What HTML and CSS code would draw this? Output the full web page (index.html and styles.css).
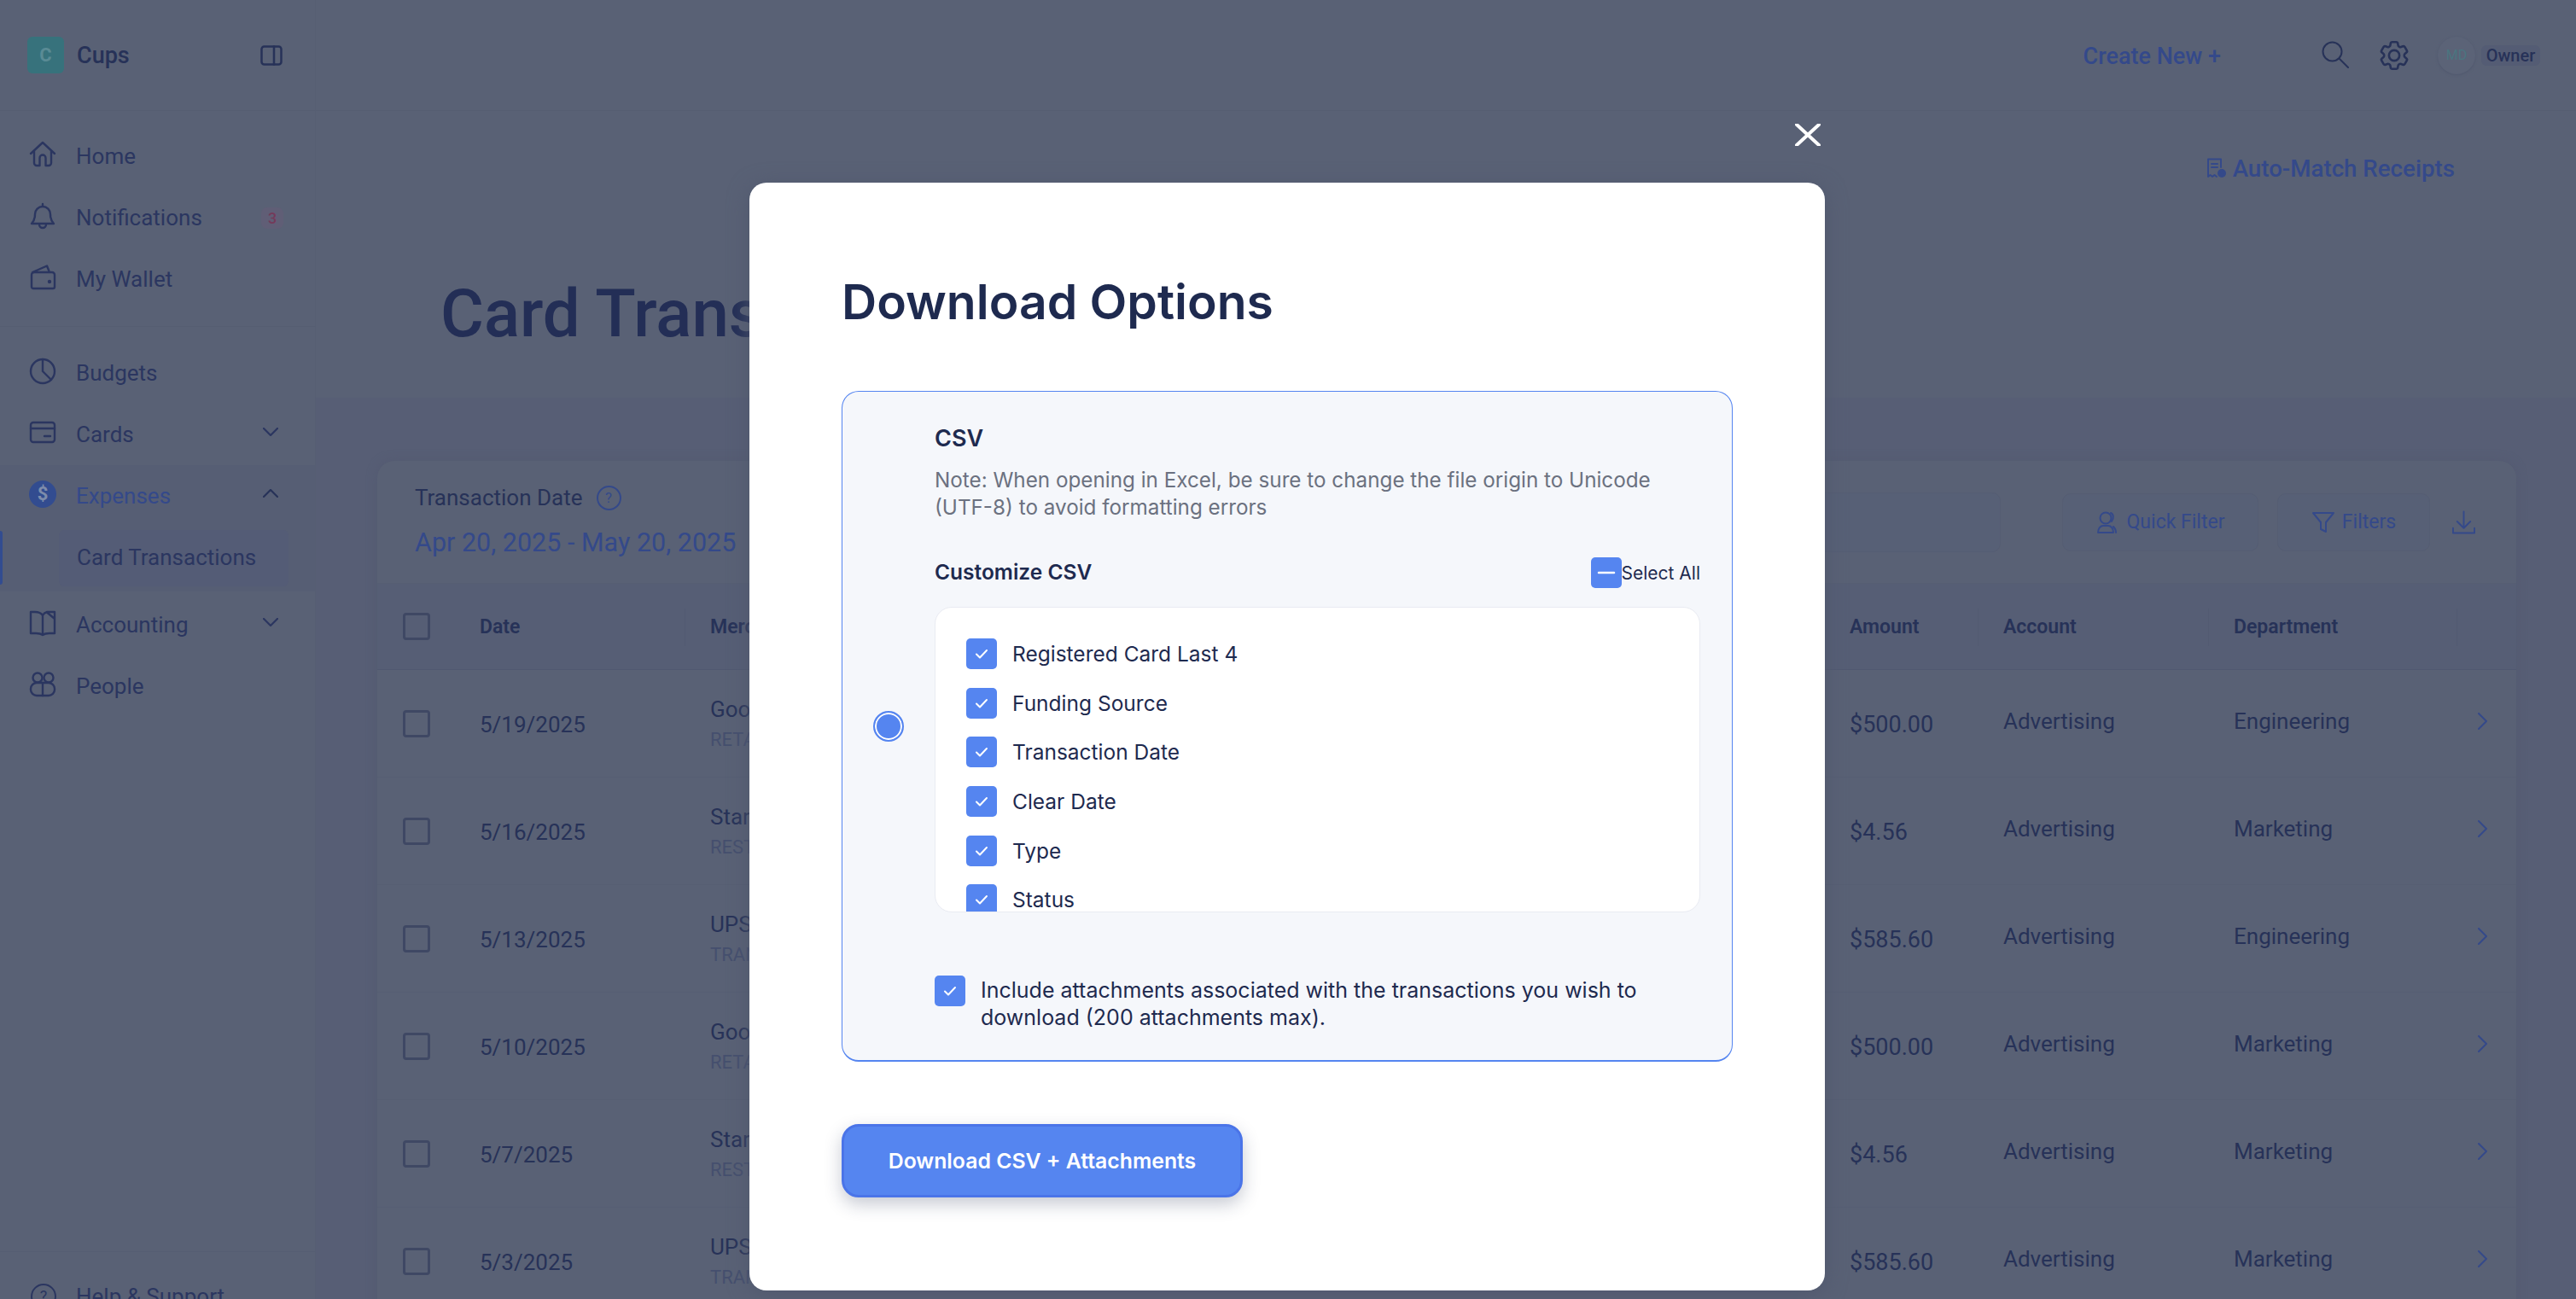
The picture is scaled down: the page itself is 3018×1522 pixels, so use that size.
FILE: index.html
```html
<!DOCTYPE html>
<html lang="en">
<head>
    <meta charset="UTF-8">
    <title>Card Transactions</title>
    <link rel="stylesheet" href="styles.css">
</head>
<body>
    <!-- Sidebar -->
    <aside class="sidebar">
        <div class="brand">
            <span class="brand-logo">C</span>
            <span class="brand-name">Cups</span>
            <svg class="panel-icon" viewBox="0 0 26 24"><rect x="1.500" y="1.500" width="23" height="21" rx="3"/><path d="M16 1.500v21"/></svg>
        </div>
        <nav class="nav-group first">
            <a class="nav-item">
                <svg class="nav-icon" viewBox="0 0 32 32"><path d="M2 15 16 2l14 13M6 12v14a3 3 0 0 0 3 3h3.500V20a3.500 3.500 0 0 1 7 0v9H23a3 3 0 0 0 3-3V12"/></svg>
                <span>Home</span>
            </a>
            <a class="nav-item">
                <svg class="nav-icon" viewBox="0 0 32 32"><path d="M16 2v3M16 5a9 9 0 0 0-9 9c0 6-2 9-4 11h26c-2-2-4-5-4-11a9 9 0 0 0-9-9ZM12 25v1a4 4 0 0 0 8 0v-1"/></svg>
                <span>Notifications</span>
                <span class="badge">3</span>
            </a>
            <a class="nav-item">
                <svg class="nav-icon" viewBox="0 0 32 32"><path d="M3 13a3 3 0 0 1 3-3h21a3 3 0 0 1 3 3v14a2 2 0 0 1-2 2H5a2 2 0 0 1-2-2V13ZM4 10 21 2.500 24 10"/><circle cx="24" cy="21" r="1" class="dot"/></svg>
                <span>My Wallet</span>
            </a>
        </nav>
        <nav class="nav-group">
            <a class="nav-item">
                <svg class="nav-icon" viewBox="0 0 32 32"><circle cx="16" cy="16" r="14"/><path d="M16 2v14l10 10"/></svg>
                <span>Budgets</span>
            </a>
            <a class="nav-item">
                <svg class="nav-icon" viewBox="0 0 32 32"><rect x="2" y="4" width="28" height="23" rx="3"/><path d="M2 11h28M18 20h7" /></svg>
                <span>Cards</span>
                <svg class="chevron" viewBox="0 0 18 10"><path d="m1 1 8 8 8-8"/></svg>
            </a>
            <div class="nav-open">
                <a class="nav-item active">
                    <span class="dollar">$</span>
                    <span>Expenses</span>
                    <svg class="chevron" viewBox="0 0 18 10"><path d="m1 9 8-8 8 8"/></svg>
                </a>
                <a class="nav-sub">Card Transactions</a>
            </div>
            <a class="nav-item">
                <svg class="nav-icon" viewBox="0 0 32 32"><path d="M16 7c-2-3-5-4-9-4H2v25h6c3 0 6 .5 8 2 2-1.500 5-2 8-2h6V3h-9c-2 .5-4 2-5 4ZM16 7v23M21 3.500 30 11"/></svg>
                <span>Accounting</span>
                <svg class="chevron" viewBox="0 0 18 10"><path d="m1 1 8 8 8-8"/></svg>
            </a>
            <a class="nav-item">
                <svg class="nav-icon" viewBox="0 0 32 32"><circle cx="10" cy="8" r="5.500"/><circle cx="23" cy="8" r="5.500"/><rect x="2" y="14" width="28" height="15" rx="7"/><path d="M16 14v15"/></svg>
                <span>People</span>
            </a>
        </nav>
        <div class="sidebar-foot">
            <a class="nav-item">
                <span class="foot-help">?</span>
                <span>Help &amp; Support</span>
            </a>
        </div>
    </aside>

    <main class="main">
        <!-- Top bar -->
        <div class="topbar">
            <a class="create-new">Create New +</a>
            <svg class="top-icon search-icon" viewBox="0 0 32 32"><circle cx="12.500" cy="12.500" r="11"/><path d="m21 21 10 10"/></svg>
            <svg class="top-icon gear-icon" viewBox="0 0 24 24"><path d="M9.594 3.940c.09-.542.56-.94 1.110-.94h2.593c.55 0 1.020.398 1.110.94l.213 1.281c.063.374.313.686.645.87.074.04.147.083.22.127.325.196.72.257 1.075.124l1.217-.456a1.125 1.125 0 0 1 1.370.49l1.296 2.247a1.125 1.125 0 0 1-.26 1.431l-1.003.827c-.293.241-.438.613-.43.992a7.723 7.723 0 0 1 0 .255c-.008.378.137.75.43.991l1.004.827c.424.35.534.955.26 1.430l-1.298 2.247a1.125 1.125 0 0 1-1.369.491l-1.217-.456c-.355-.133-.75-.072-1.076.124a6.470 6.470 0 0 1-.22.128c-.331.183-.581.495-.644.869l-.213 1.281c-.09.543-.56.94-1.110.94h-2.594c-.55 0-1.019-.398-1.110-.94l-.213-1.281c-.062-.374-.312-.686-.644-.87a6.520 6.520 0 0 1-.22-.127c-.325-.196-.72-.257-1.076-.124l-1.217.456a1.125 1.125 0 0 1-1.369-.49l-1.297-2.247a1.125 1.125 0 0 1 .26-1.431l1.004-.827c.292-.24.437-.613.43-.991a6.932 6.932 0 0 1 0-.255c.007-.38-.138-.751-.43-.992l-1.004-.827a1.125 1.125 0 0 1-.26-1.430l1.297-2.247a1.125 1.125 0 0 1 1.370-.491l1.216.456c.356.133.751.072 1.076-.124.072-.044.146-.086.22-.128.332-.183.582-.495.644-.869l.214-1.280Z"/><circle cx="12" cy="12" r="3.500"/></svg>
            <span class="avatar">MD</span>
            <span class="role">Owner</span>
        </div>

        <!-- Page header -->
        <header class="page-head">
            <a class="auto-match">
                <svg class="receipt-icon" viewBox="0 0 24 24"><path d="M13 22l-2.500-2-2.500 2-2.500-2L3 22V1.500h15V11M7 7h7M7 11h7"/><circle cx="19" cy="18" r="5" class="fill"/></svg>
                Auto-Match Receipts
            </a>
            <h1>Card Transactions</h1>
        </header>

        <section class="page-body">
            <div class="card">
                <div class="toolbar">
                    <div class="date-block">
                        <div class="date-label">Transaction Date <span class="help">?</span></div>
                        <div class="date-range">Apr 20, 2025 - May 20, 2025</div>
                    </div>
                    <div class="search-box"></div>
                    <button class="tool-btn quick">
                        <svg viewBox="0 0 28 28"><circle cx="11" cy="9" r="6.500"/><path d="M2 26c0-5 3-8 6-8h6c3 0 6 3 6 8ZM17 3c3 1 4 6 1 10M23 26c0-3-1-5-3-7"/></svg>
                        Quick Filter
                    </button>
                    <button class="tool-btn filters">
                        <svg viewBox="0 0 28 28"><path d="M2 3h24l-9 11v11l-6-3v-8Z"/></svg>
                        Filters
                    </button>
                    <svg class="download-icon" viewBox="0 0 28 28"><path d="M14 1v20M6 13l8 8 8-8M1 21v6h26v-6"/></svg>
                </div>

                <div class="row head-row">
                    <span class="cell check"><span class="box"></span></span>
                    <span class="cell col-line">Date</span>
                    <span class="cell col-line">Merchant</span>
                    <span class="cell col-line">Amount</span>
                    <span class="cell col-line">Account</span>
                    <span class="cell col-line">Department</span>
                    <span class="cell"></span>
                </div>

                <div class="row">
                    <span class="cell check"><span class="box"></span></span>
                    <span class="cell low">5/19/2025</span>
                    <span class="cell merchant"><b>Google</b><small>RETAIL</small></span>
                    <span class="cell low amount">$500.00</span>
                    <span class="cell high">Advertising</span>
                    <span class="cell high">Engineering</span>
                    <span class="cell high"><svg class="row-arrow" viewBox="0 0 12 20"><path d="m1 1 9 9-9 9"/></svg></span>
                </div>
                <div class="row">
                    <span class="cell check"><span class="box"></span></span>
                    <span class="cell low">5/16/2025</span>
                    <span class="cell merchant"><b>Starbucks</b><small>RESTAURANT</small></span>
                    <span class="cell low amount">$4.56</span>
                    <span class="cell high">Advertising</span>
                    <span class="cell high">Marketing</span>
                    <span class="cell high"><svg class="row-arrow" viewBox="0 0 12 20"><path d="m1 1 9 9-9 9"/></svg></span>
                </div>
                <div class="row">
                    <span class="cell check"><span class="box"></span></span>
                    <span class="cell low">5/13/2025</span>
                    <span class="cell merchant"><b>UPS</b><small>TRANSPORT</small></span>
                    <span class="cell low amount">$585.60</span>
                    <span class="cell high">Advertising</span>
                    <span class="cell high">Engineering</span>
                    <span class="cell high"><svg class="row-arrow" viewBox="0 0 12 20"><path d="m1 1 9 9-9 9"/></svg></span>
                </div>
                <div class="row">
                    <span class="cell check"><span class="box"></span></span>
                    <span class="cell low">5/10/2025</span>
                    <span class="cell merchant"><b>Google</b><small>RETAIL</small></span>
                    <span class="cell low amount">$500.00</span>
                    <span class="cell high">Advertising</span>
                    <span class="cell high">Marketing</span>
                    <span class="cell high"><svg class="row-arrow" viewBox="0 0 12 20"><path d="m1 1 9 9-9 9"/></svg></span>
                </div>
                <div class="row">
                    <span class="cell check"><span class="box"></span></span>
                    <span class="cell low">5/7/2025</span>
                    <span class="cell merchant"><b>Starbucks</b><small>RESTAURANT</small></span>
                    <span class="cell low amount">$4.56</span>
                    <span class="cell high">Advertising</span>
                    <span class="cell high">Marketing</span>
                    <span class="cell high"><svg class="row-arrow" viewBox="0 0 12 20"><path d="m1 1 9 9-9 9"/></svg></span>
                </div>
                <div class="row">
                    <span class="cell check"><span class="box"></span></span>
                    <span class="cell low">5/3/2025</span>
                    <span class="cell merchant"><b>UPS</b><small>TRANSPORT</small></span>
                    <span class="cell low amount">$585.60</span>
                    <span class="cell high">Advertising</span>
                    <span class="cell high">Marketing</span>
                    <span class="cell high"><svg class="row-arrow" viewBox="0 0 12 20"><path d="m1 1 9 9-9 9"/></svg></span>
                </div>
            </div>
        </section>
    </main>

    <!-- Download modal -->
    <svg class="modal-close" viewBox="0 0 30 26"><path d="M2 1l26 24M28 1 2 25"/></svg>
    <div class="modal">
        <h2>Download Options</h2>
        <div class="option">
            <span class="radio"></span>
            <div class="option-body">
                <h3>CSV</h3>
                <p class="note">Note: When opening in Excel, be sure to change the file origin to Unicode (UTF-8) to avoid formatting errors</p>
                <div class="customize">
                    <span class="customize-title">Customize CSV</span>
                    <label class="select-all">
                        <span class="tick"><svg viewBox="0 0 36 36"><path class="minus" d="M9 18h18"/></svg></span>
                        Select All
                    </label>
                </div>
                <div class="field-list">
                    <label class="field"><span class="tick"><svg viewBox="0 0 36 36"><path d="m12 18.500 4 4 8-8.500"/></svg></span>Registered Card Last 4</label>
                    <label class="field"><span class="tick"><svg viewBox="0 0 36 36"><path d="m12 18.500 4 4 8-8.500"/></svg></span>Funding Source</label>
                    <label class="field"><span class="tick"><svg viewBox="0 0 36 36"><path d="m12 18.500 4 4 8-8.500"/></svg></span>Transaction Date</label>
                    <label class="field"><span class="tick"><svg viewBox="0 0 36 36"><path d="m12 18.500 4 4 8-8.500"/></svg></span>Clear Date</label>
                    <label class="field"><span class="tick"><svg viewBox="0 0 36 36"><path d="m12 18.500 4 4 8-8.500"/></svg></span>Type</label>
                    <label class="field"><span class="tick"><svg viewBox="0 0 36 36"><path d="m12 18.500 4 4 8-8.500"/></svg></span>Status</label>
                </div>
                <label class="attach">
                    <span class="tick"><svg viewBox="0 0 36 36"><path d="m12 18.500 4 4 8-8.500"/></svg></span>
                    <span>Include attachments associated with the transactions you wish to download (200 attachments max).</span>
                </label>
            </div>
        </div>
        <button class="download-btn">Download CSV + Attachments</button>
    </div>
</body>
</html>
```

FILE: styles.css
```css
/* Page under the modal is painted in its dimmed colours */
* {
    box-sizing: border-box;
}
body {
    margin: 0;
    width: 3018px;
    height: 1522px;
    overflow: hidden;
    display: flex;
    font-family: Roboto, sans-serif;
    background-color: #596175;
    color: #273258;
}
svg {
    display: block;
    fill: none;
    stroke: currentColor;
    stroke-width: 2;
    stroke-linecap: round;
    stroke-linejoin: round;
}

/* Sidebar */
.sidebar {
    width: 370px;
    height: 1522px;
    flex-shrink: 0;
    display: flex;
    flex-direction: column;
    border-right: 1px solid #565e73;
    overflow: hidden;
}
.brand {
    height: 130px;
    flex-shrink: 0;
    display: flex;
    align-items: center;
    padding-left: 32px;
    border-bottom: 1px solid #555d72;
}
.brand-logo {
    width: 43px;
    height: 43px;
    border-radius: 6px;
    background: #37727c;
    color: #5a8b95;
    font-size: 22px;
    font-weight: 700;
    display: flex;
    align-items: center;
    justify-content: center;
}
.brand-name {
    margin-left: 15px;
    font-size: 27px;
    font-weight: 500;
}
.panel-icon {
    width: 26px;
    height: 24px;
    margin-left: auto;
    margin-right: 38px;
    stroke-width: 2.500;
}
.nav-group {
    padding-top: 18px;
    padding-bottom: 19px;
    border-bottom: 1px solid #555d72;
}
.nav-group.first {
    padding-top: 17px;
}
.nav-group:nth-of-type(2) {
    border-bottom: none;
    flex: 1;
}
.nav-item {
    height: 72px;
    padding-left: 34px;
    display: flex;
    align-items: center;
    font-size: 26px;
    color: #2b3660;
}
.nav-icon {
    width: 32px;
    height: 32px;
    margin-top: -5px;
    margin-right: 23px;
    flex-shrink: 0;
    stroke-width: 2.400;
}
.nav-icon .dot {
    fill: currentColor;
}
.badge {
    width: 26px;
    height: 25px;
    margin-left: auto;
    margin-right: 37px;
    border-radius: 7px;
    background: #605e76;
    color: #743a5a;
    font-size: 18px;
    font-weight: 500;
    display: flex;
    align-items: center;
    justify-content: center;
}
.chevron {
    width: 18px;
    height: 10px;
    margin-left: auto;
    margin-right: 43px;
    margin-top: -6px;
    stroke-width: 2.200;
}
.nav-open {
    height: 148px;
    margin-bottom: 3px;
    background: #565e74;
    position: relative;
}
.nav-item.active {
    color: #34498a;
}
.nav-item.active .chevron {
    color: #273258;
}
.dollar {
    width: 32px;
    height: 32px;
    margin-top: -5px;
    margin-right: 23px;
    border-radius: 50%;
    background: #324c90;
    color: #7e8cab;
    font-size: 22px;
    font-weight: 700;
    display: flex;
    align-items: center;
    justify-content: center;
}
.nav-sub {
    display: block;
    height: 66px;
    margin-top: 4px;
    margin-left: 69px;
    margin-right: 31px;
    padding-left: 21px;
    line-height: 64px;
    border-radius: 6px;
    background: #545c76;
    font-size: 26px;
    color: #2b3660;
}
/* accent bar next to the open sub item */
.nav-open::before {
    content: "";
    position: absolute;
    left: 0;
    top: 77px;
    width: 3px;
    height: 63px;
    border-radius: 0 3px 3px 0;
    background: #324c90;
}
.sidebar-foot {
    height: 56px;
    flex-shrink: 0;
    padding-top: 16px;
    border-top: 1px solid #555d72;
}
.foot-help {
    width: 30px;
    height: 30px;
    margin-top: -1px;
    margin-left: 2px;
    margin-right: 23px;
    border: 2px solid #2b3660;
    border-radius: 50%;
    font-size: 18px;
    display: flex;
    align-items: center;
    justify-content: center;
}

/* Main */
.main {
    flex: 1;
    display: flex;
    flex-direction: column;
    min-width: 0;
}
.topbar {
    height: 130px;
    flex-shrink: 0;
    display: flex;
    align-items: center;
    justify-content: flex-end;
    padding-right: 42px;
    border-bottom: 1px solid #555d72;
}
.create-new {
    margin-right: 118px;
    margin-top: 2px;
    font-size: 27px;
    font-weight: 500;
    color: #34498a;
}
.top-icon {
    width: 32px;
    height: 32px;
}
.search-icon {
    margin-right: 32px;
    margin-top: -1px;
}
.gear-icon {
    width: 42px;
    height: 42px;
    margin-right: 30px;
    stroke-width: 1.500;
}
.avatar {
    width: 44px;
    height: 44px;
    margin-right: 7px;
    border-radius: 50%;
    background: #5b6377;
    box-shadow: 0 1px 3px #50586e;
    color: #4a7580;
    font-size: 16px;
    display: flex;
    align-items: center;
    justify-content: center;
}
.role {
    width: 69px;
    height: 24px;
    border-radius: 6px;
    background: #545c74;
    font-size: 20px;
    font-weight: 500;
    display: flex;
    align-items: center;
    justify-content: center;
}
.page-head {
    height: 336px;
    flex-shrink: 0;
    padding: 52px 142px 0 146px;
}
.auto-match {
    height: 30px;
    display: flex;
    justify-content: flex-end;
    align-items: center;
    gap: 8px;
    font-size: 27.700px;
    font-weight: 500;
    color: #34498a;
}
.receipt-icon {
    width: 24px;
    height: 24px;
}
.receipt-icon .fill {
    fill: #34498a;
    stroke: none;
}
.page-head h1 {
    margin: 114px 0 0;
    font-size: 78px;
    line-height: 84px;
    font-weight: 500;
    white-space: nowrap;
    color: #232e56;
}
.page-body {
    flex: 1;
    padding: 74px 70px 0 72px;
    background: #575e75;
    min-height: 0;
}
.card {
    background: #596175;
    border-radius: 20px 20px 0 0;
    box-shadow: 0 0 12px #535a71;
}
.toolbar {
    height: 144px;
    padding: 0 48px 0 44px;
    display: flex;
    align-items: center;
    border-bottom: 1px solid #565e73;
}
.date-label {
    display: flex;
    align-items: center;
    height: 32px;
    margin-top: 2px;
    gap: 16px;
    font-size: 26px;
}
.help {
    width: 29px;
    height: 29px;
    border: 2px solid #34498a;
    border-radius: 50%;
    color: #34498a;
    font-size: 17px;
    display: flex;
    align-items: center;
    justify-content: center;
}
.date-range {
    margin-top: 15px;
    font-size: 30.500px;
    line-height: 44px;
    color: #34498a;
}
.search-box {
    width: 500px;
    height: 70px;
    margin-left: auto;
    border: 1px solid #555d73;
    border-radius: 10px;
    background: #576076;
}
.tool-btn {
    height: 68px;
    border: 1px solid #555d73;
    border-radius: 10px;
    background: #576076;
    color: #34498a;
    font-family: inherit;
    font-size: 23px;
    display: flex;
    align-items: center;
    justify-content: center;
    gap: 8px;
}
.tool-btn svg {
    width: 28px;
    height: 28px;
}
.quick {
    width: 230px;
    margin-left: 72px;
}
.filters {
    width: 179px;
    margin-left: 22px;
}
.download-icon {
    width: 27px;
    height: 28px;
    margin-left: 26px;
    color: #34498a;
}

/* Table */
.row {
    height: 126px;
    display: grid;
    grid-template-columns: 120px 270px 1335px 180px 270px 291px 40px;
    align-items: center;
    border-bottom: 1px solid #565e73;
    font-size: 26px;
}
.head-row {
    height: 101px;
    background: #565e75;
    font-size: 23px;
    font-weight: 600;
    border-bottom-color: #505870;
}
.cell {
    position: relative;
}
.check {
    padding-left: 30px;
}
.box {
    display: block;
    width: 32px;
    height: 32px;
    border: 3px solid #3f4864;
    border-radius: 4px;
}
.head-row .col-line::after {
    content: "";
    position: absolute;
    right: 29px;
    top: -8px;
    height: 44px;
    width: 1px;
    background: #525a72;
}
.low {
    padding-top: 3px;
}
.amount {
    font-size: 27px;
}
.high {
    padding-bottom: 6px;
}
.merchant {
    display: flex;
    flex-direction: column;
    padding-top: 2px;
}
.merchant b {
    font-weight: 400;
    line-height: 36px;
}
.merchant small {
    font-size: 22px;
    line-height: 36px;
    color: #454f6e;
}
.row-arrow {
    width: 12px;
    height: 20px;
    margin-left: -5px;
    color: #34498a;
}

/* Modal */
.modal-close {
    position: absolute;
    left: 2103px;
    top: 145px;
    width: 30px;
    height: 26px;
    color: #fff;
    stroke-width: 4;
}
.modal {
    position: absolute;
    left: 878px;
    top: 214px;
    width: 1260px;
    height: 1298px;
    padding: 104px 108px 0 108px;
    border-radius: 20px;
    background: #fff;
    box-shadow: 0 4px 24px #50586e;
    font-family: Inter, sans-serif;
    color: #1e2a4f;
}
.modal h2 {
    margin: 0;
    font-size: 57px;
    line-height: 72px;
    font-weight: 600;
}
.option {
    margin-top: 68px;
    height: 786px;
    padding: 0 37px 0 36px;
    display: flex;
    align-items: center;
    gap: 36px;
    border: 1px solid #5585f0;
    border-bottom-width: 2px;
    border-radius: 20px;
    background: #f5f7fb;
}
.radio {
    width: 36px;
    height: 36px;
    flex-shrink: 0;
    border: 2px solid #5585f0;
    border-radius: 50%;
    background: #5585f0;
    box-shadow: inset 0 0 0 2px #fff;
}
.option-body {
    flex: 1;
    min-width: 0;
}
.option-body h3 {
    margin: 3px 0 0;
    font-size: 27px;
    line-height: 36px;
    font-weight: 600;
}
.note {
    margin: 15px 0 0;
    font-size: 24.250px;
    line-height: 32px;
    color: #6b7180;
}
.customize {
    margin-top: 42px;
    height: 36px;
    display: flex;
    align-items: center;
    justify-content: space-between;
}
.customize-title {
    margin-top: -2px;
    font-size: 24.500px;
    font-weight: 600;
}
.select-all {
    display: flex;
    align-items: center;
    font-size: 21px;
}
.tick {
    width: 36px;
    height: 36px;
    flex-shrink: 0;
    border-radius: 5px;
    background: #5585f0;
    color: #fff;
}
.tick svg {
    width: 36px;
    height: 36px;
    stroke-width: 2;
}
.minus {
    stroke-width: 2.500;
}
.field-list {
    height: 358px;
    margin-top: 22px;
    padding: 36px 0 0 36px;
    overflow: hidden;
    display: flex;
    flex-direction: column;
    gap: 21.700px;
    border: 1px solid #e9ebf2;
    border-radius: 20px;
    background: #fff;
}
.field {
    display: flex;
    align-items: center;
    flex-shrink: 0;
    gap: 18px;
    font-size: 24.500px;
}
.attach {
    margin-top: 74px;
    display: flex;
    gap: 18px;
    font-size: 25px;
    line-height: 32px;
}
.attach span:last-child {
    margin-top: 1px;
}
.download-btn {
    display: block;
    margin-top: 73px;
    width: 470px;
    height: 86px;
    border: 3px solid #4a74e8;
    border-radius: 20px;
    background: #5585f0;
    box-shadow: 0 8px 20px rgba(30, 42, 79, 0.25);
    color: #fff;
    font-family: inherit;
    font-size: 24.800px;
    font-weight: 600;
}
```
